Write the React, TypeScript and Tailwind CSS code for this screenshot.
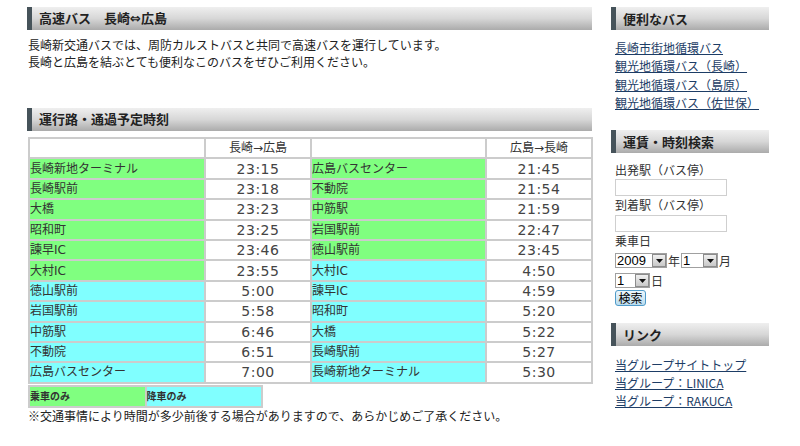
import React from 'react';

const G = 'bg-[#80ff80]';
const C = 'bg-[#80ffff]';

type Row = { a: string; ac: string; at: string; b: string; bc: string; bt: string };

const rows: Row[] = [
  { a: '長崎新地ターミナル', ac: G, at: '23:15', b: '広島バスセンター', bc: G, bt: '21:45' },
  { a: '長崎駅前', ac: G, at: '23:18', b: '不動院', bc: G, bt: '21:54' },
  { a: '大橋', ac: G, at: '23:23', b: '中筋駅', bc: G, bt: '21:59' },
  { a: '昭和町', ac: G, at: '23:25', b: '岩国駅前', bc: G, bt: '22:47' },
  { a: '諫早IC', ac: G, at: '23:46', b: '徳山駅前', bc: G, bt: '23:45' },
  { a: '大村IC', ac: G, at: '23:55', b: '大村IC', bc: C, bt: '4:50' },
  { a: '徳山駅前', ac: C, at: '5:00', b: '諫早IC', bc: C, bt: '4:59' },
  { a: '岩国駅前', ac: C, at: '5:58', b: '昭和町', bc: C, bt: '5:20' },
  { a: '中筋駅', ac: C, at: '6:46', b: '大橋', bc: C, bt: '5:22' },
  { a: '不動院', ac: C, at: '6:51', b: '長崎駅前', bc: C, bt: '5:27' },
  { a: '広島バスセンター', ac: C, at: '7:00', b: '長崎新地ターミナル', bc: C, bt: '5:30' },
];

function Heading({ children }: { children: React.ReactNode }) {
  return (
    <div className="h-[23px] border-l-[5px] border-[#46535a] bg-linear-to-b from-[#efefef] via-[#d7d7d7] to-[#ababab] flex items-center pl-[7px] text-[13px] font-bold text-[#222]">
      {children}
    </div>
  );
}

function FakeSelect({ value, width }: { value: string; width: string }) {
  return (
    <div className={`${width} h-[15px] border border-[#a0a0a0] bg-white flex items-center justify-between`}>
      <span className="pl-[1px] text-[13px] leading-none text-black font-['Liberation_Sans',sans-serif]">{value}</span>
      <span className="w-[14px] h-[13px] border border-[#8c8c8c] bg-linear-to-b from-[#f0f0f0] to-[#c8c8c8] flex items-center justify-center">
        <svg width="7" height="4" viewBox="0 0 7 4">
          <path d="M0 0h7L3.5 4z" fill="#111" />
        </svg>
      </span>
    </div>
  );
}

export default function App() {
  const cell = 'border-2 border-[#cccccc] p-0';
  return (
    <div className="w-[800px] h-[446px] bg-white overflow-hidden flex gap-[19px] pl-[27px] pt-[7px] font-['DejaVu_Sans','Noto_Sans_CJK_JP',sans-serif] text-[#222]">
      {/* main column */}
      <div className="w-[565px] flex flex-col">
        <Heading>高速バス　長崎⇔広島</Heading>
        <p className="mt-[6px] pl-[1px] text-[12px] leading-[17px] font-['Noto_Sans_CJK_JP',sans-serif]">
          長崎新交通バスでは、周防カルストバスと共同で高速バスを運行しています。
          <br />
          長崎と広島を結ぶとても便利なこのバスをぜひご利用ください。
        </p>

        <div className="mt-[38px]">
          <Heading>運行路・通過予定時刻</Heading>
        </div>

        <table className="mt-[6px] ml-[1px] w-[563px] border-collapse table-fixed text-[12px] text-[#333]">
          <colgroup>
            <col className="w-[176px]" />
            <col className="w-[106px]" />
            <col className="w-[175px]" />
            <col className="w-[106px]" />
          </colgroup>
          <tbody>
            <tr className="h-[20.4px]">
              <td className={cell}></td>
              <td className={`${cell} text-center`}>長崎→広島</td>
              <td className={cell}></td>
              <td className={`${cell} text-center`}>広島→長崎</td>
            </tr>
            {rows.map((r, i) => (
              <tr key={i} className="h-[20.4px]">
                <td className={`${cell} ${r.ac} leading-[16px]`}>{r.a}</td>
                <td className={`${cell} text-center text-[14px] leading-[16px] tracking-[0.5px] text-[#444]`}>{r.at}</td>
                <td className={`${cell} ${r.bc} leading-[16px]`}>{r.b}</td>
                <td className={`${cell} text-center text-[14px] leading-[16px] tracking-[0.5px] text-[#444]`}>{r.bt}</td>
              </tr>
            ))}
          </tbody>
        </table>

        <table className="mt-[1px] ml-[1px] w-[235px] border-collapse table-fixed text-[10px] font-bold text-[#333]">
          <tbody>
            <tr className="h-[21px]">
              <td className={`${cell} ${G}`}>乗車のみ</td>
              <td className={`${cell} ${C}`}>降車のみ</td>
            </tr>
          </tbody>
        </table>
        <p className="pl-[1px] text-[12px] leading-[16px] font-['Noto_Sans_CJK_JP',sans-serif]">
          ※交通事情により時間が多少前後する場合がありますので、あらかじめご了承ください。
        </p>
      </div>

      {/* sidebar */}
      <div className="w-[158px] flex flex-col text-[12px] font-['Noto_Sans_CJK_JP',sans-serif]">
        <Heading>便利なバス</Heading>
        <ul className="mt-[9px] pl-[4px] leading-[18.3px] text-[#1d3d66] underline">
          <li><a href="#">長崎市街地循環バス</a></li>
          <li><a href="#">観光地循環バス（長崎）</a></li>
          <li><a href="#">観光地循環バス（島原）</a></li>
          <li><a href="#">観光地循環バス（佐世保）</a></li>
        </ul>

        <div className="mt-[18px]">
          <Heading>運賃・時刻検索</Heading>
        </div>
        <div className="pl-[4px] flex flex-col text-[#333]">
          <span className="mt-[8px] leading-[18px]">出発駅（バス停）</span>
          <div className="w-[112px] h-[17px] border border-[#cfcfcf] bg-white"></div>
          <span className="leading-[18px]">到着駅（バス停）</span>
          <div className="mt-[1px] w-[112px] h-[17px] border border-[#cfcfcf] bg-white"></div>
          <span className="leading-[18px]">乗車日</span>
          <div className="mt-[3px] flex items-center gap-[1px]">
            <FakeSelect value="2009" width="w-[52px]" />
            <span className="leading-none">年</span>
            <FakeSelect value="1" width="w-[37px]" />
            <span className="leading-none">月</span>
          </div>
          <div className="mt-[5px] flex items-center gap-[1px]">
            <FakeSelect value="1" width="w-[35px]" />
            <span className="leading-none">日</span>
          </div>
          <button className="mt-[2px] w-[31px] h-[16px] border border-[#4f9bc9] rounded-[3px] bg-linear-to-b from-[#eef7fc] to-[#b9dcef] text-[12px] leading-none text-black flex items-center justify-center">
            検索
          </button>
        </div>

        <div className="mt-[17px]">
          <Heading>リンク</Heading>
        </div>
        <ul className="mt-[10px] pl-[4px] leading-[18px] text-[#1d3d66] underline">
          <li><a href="#">当グループサイトトップ</a></li>
          <li><a href="#">当グループ：LINICA</a></li>
          <li><a href="#">当グループ：RAKUCA</a></li>
        </ul>
      </div>
    </div>
  );
}
